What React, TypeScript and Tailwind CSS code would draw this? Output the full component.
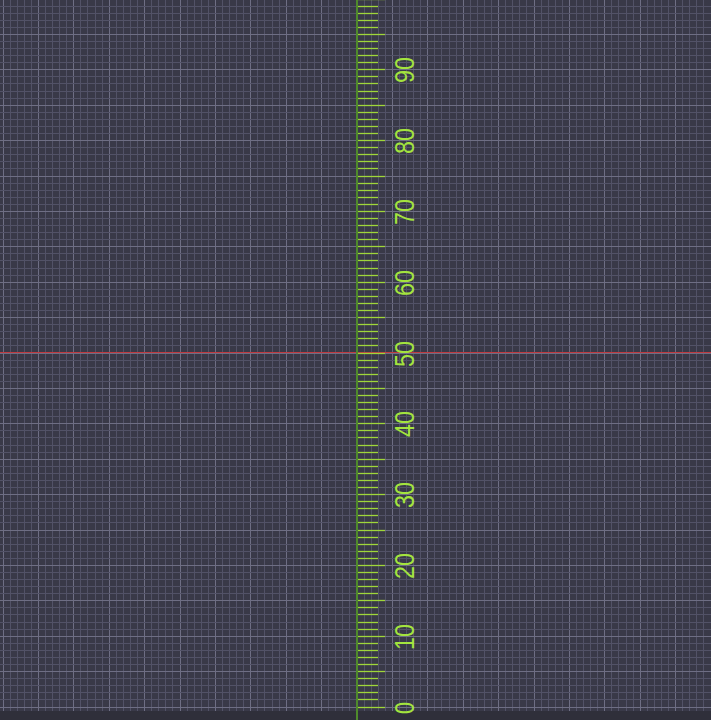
import React from "react";

const U = 7.08; // px per unit
const OX = 357.5; // ruler x
const OY = 707.5; // value 0

const cols = Array.from({ length: 101 }, (_, i) => i - 50);
const rows = Array.from({ length: 101 }, (_, i) => i);
const labels = [0, 10, 20, 30, 40, 50, 60, 70, 80, 90];

function Grid() {
  return (
    <svg width="711" height="720" className="block absolute inset-0">
      {cols.map((k) => {
        const x = Math.round(OX + k * U) - 0.5;
        const major = k % 5 === 0;
        return (
          <line
            key={"c" + k}
            x1={x}
            x2={x}
            y1={0}
            y2={711}
            stroke={major ? "#6e6e84" : "#525267"}
            strokeWidth={1}
          />
        );
      })}
      {rows.map((k) => {
        const y = Math.round(OY - k * U) - 0.5;
        const major = k % 5 === 0;
        return (
          <line
            key={"r" + k}
            x1={0}
            x2={711}
            y1={y}
            y2={y}
            stroke={major ? "#6e6e84" : "#525267"}
            strokeWidth={1}
          />
        );
      })}
      <line x1={0} x2={711} y1={352.5} y2={352.5} stroke="#bf3a40" strokeWidth={1.2} />
      <rect x={356} y={0} width={2} height={720} fill="#4f8a2c" />
      {/* ruler ticks */}
      {rows.map((k) => {
        const y = Math.round(OY - k * U) - 0.5;
        const long = k % 5 === 0;
        return (
          <line
            key={"t" + k}
            x1={358}
            x2={long ? 385 : 378}
            y1={y}
            y2={y}
            stroke="#9fd63a"
            strokeWidth={1.3}
          />
        );
      })}
      {labels.map((v) => {
        const y = Math.round(OY - v * U);
        return (
          <text
            key={"l" + v}
            transform={`translate(414 ${y}) rotate(-90)`}
            textAnchor="middle"
            fill="#a4e43e"
            fontSize={27}
            textLength={v === 0 ? 12 : 26}
            lengthAdjust="spacingAndGlyphs"
            style={{ fontFamily: '"Liberation Sans", Arial, sans-serif' }}
          >
            {v}
          </text>
        );
      })}
    </svg>
  );
}

export default function App() {
  return (
    <div className="relative w-[711px] h-[720px] flex flex-col bg-[#393948] overflow-hidden">
      <div className="flex-1" />
      <div className="h-[9px] bg-[#2f2f3a]" />
      <Grid />
    </div>
  );
}
